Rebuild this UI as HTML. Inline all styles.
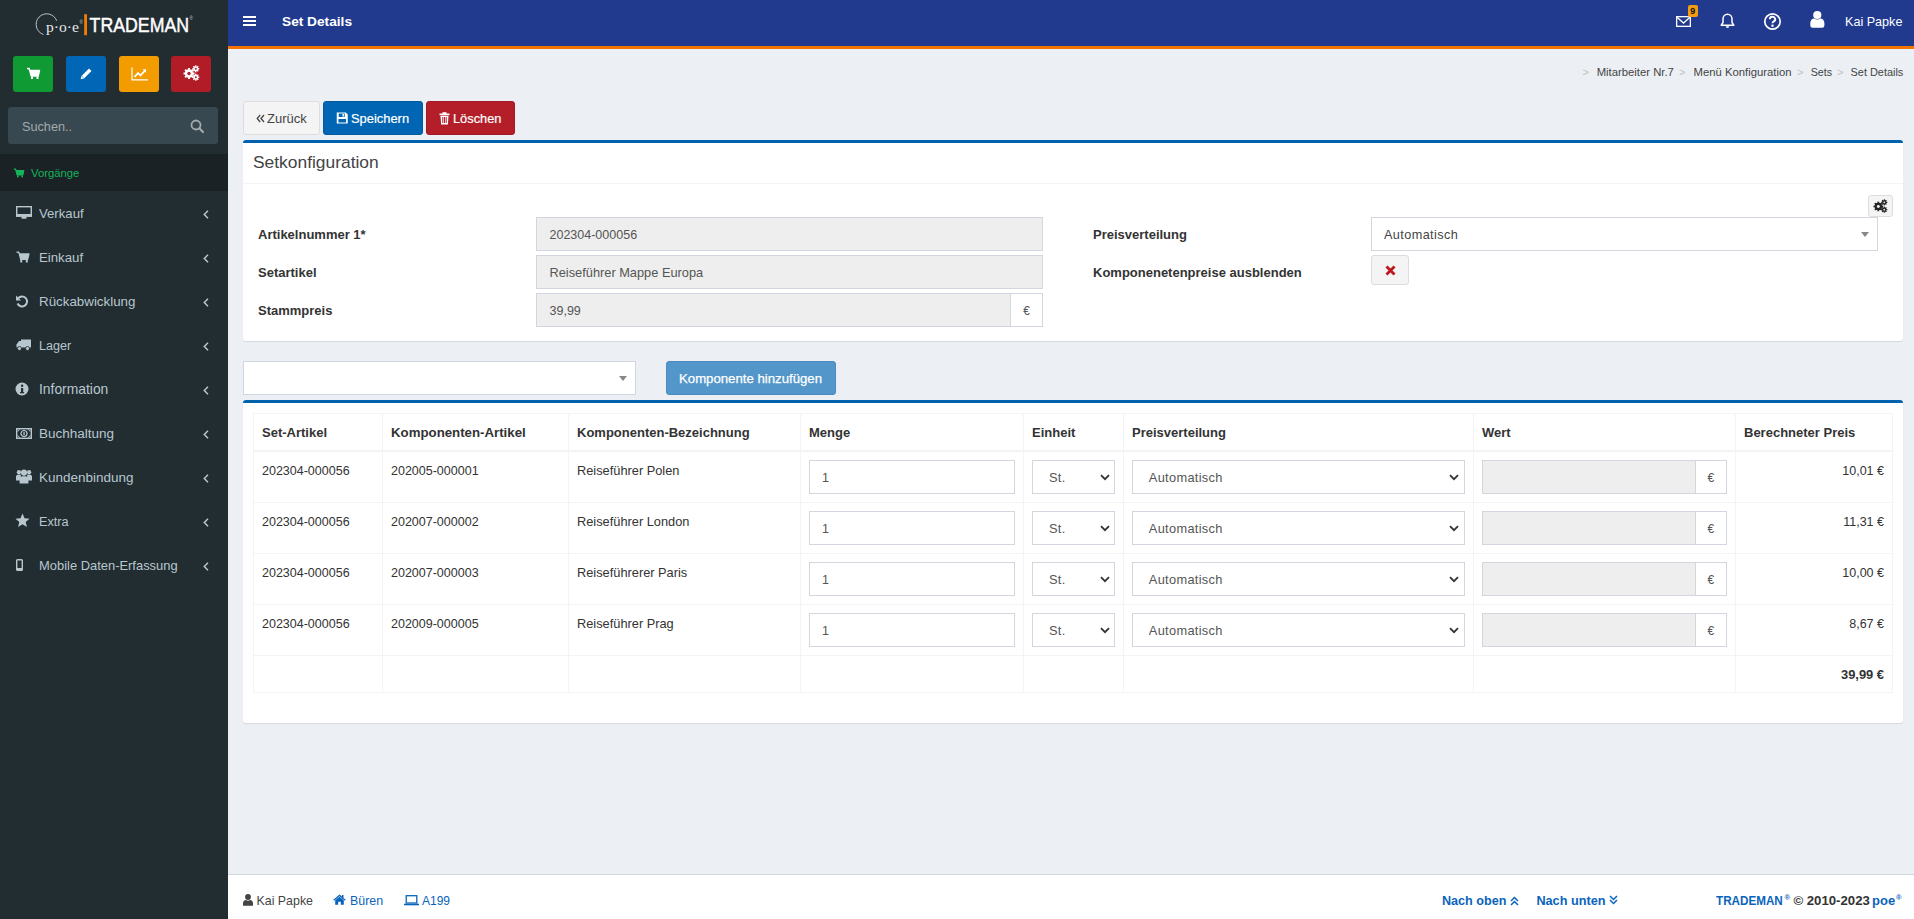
<!DOCTYPE html>
<html><head><meta charset="utf-8">
<style>
*{box-sizing:border-box;margin:0;padding:0}
html,body{width:1914px;height:919px;overflow:hidden;background:#ecf0f5;font-family:"Liberation Sans",sans-serif;color:#333}
.a{position:absolute}
.t{position:absolute;line-height:1;white-space:nowrap}
svg{position:absolute;display:block;overflow:visible}
.qb{position:absolute;top:56px;width:40px;height:36px;border-radius:3px}
.btn{position:absolute;top:101px;height:34px;border-radius:3px;border:1px solid}
.box{position:absolute;left:243px;width:1660px;background:#fff;border-top:3px solid #0062ad;border-radius:3px;box-shadow:0 1px 1px rgba(0,0,0,.1)}
.inp{position:absolute;height:34px;border:1px solid #d2d6de;background:#eee}
.fin{position:absolute;height:34px;border:1px solid #d2d6de;background:#fff}
.vl{position:absolute;top:413px;width:1px;height:280px;background:#f4f4f4}
.hl{position:absolute;left:253px;width:1640px;height:1px;background:#f4f4f4}
</style></head>
<body>
<div class="a" style="left:0;top:0;width:228px;height:919px;background:#222d32"></div>
<svg style="left:30px;top:10px" width="170" height="30" viewBox="0 0 170 30">
  <path d="M13.5 24.5 A10.6 10.6 0 1 1 26.7 10.8" fill="none" stroke="#d0d0d0" stroke-width="0.9"/>
  <text x="16" y="21.5" font-family="Liberation Serif" font-size="15" fill="#e8e8e8" textLength="33" lengthAdjust="spacingAndGlyphs">p·o·e</text>
  <text x="49.5" y="14" font-family="Liberation Sans" font-size="4.5" fill="#ccc">®</text>
  <rect x="54.2" y="4.2" width="2.8" height="21" fill="#f57c00"/>
  <text x="59.6" y="22.2" font-family="Liberation Sans" font-size="20.5" fill="#fff" stroke="#fff" stroke-width="0.45" textLength="99.5" lengthAdjust="spacingAndGlyphs">TRADEMAN</text>
  <text x="159.6" y="9.5" font-family="Liberation Sans" font-size="4.5" fill="#ccc">®</text>
</svg>
<div class="qb" style="left:13px;background:#0f9a34"></div>
<div class="qb" style="left:66px;background:#0066b5"></div>
<div class="qb" style="left:119px;background:#f39c00"></div>
<div class="qb" style="left:171px;background:#b11c27"></div>
<svg style="left:26px;top:66px" width="15" height="15" viewBox="0 0 15 15"><path d="M1 2.5h2.2l2 7.5h7l1.3-5.5H4.3" fill="#fff" stroke="#fff" stroke-width="1.4" stroke-linejoin="round"/><rect x="4.5" y="4.5" width="8.5" height="4.5" fill="#fff"/><rect x="5" y="10.5" width="2" height="2.5" fill="#fff"/><rect x="10.5" y="10.5" width="2" height="2.5" fill="#fff"/></svg>
<svg style="left:79px;top:67px" width="14" height="14" viewBox="0 0 14 14"><path d="M10 1.5l2.5 2.5-7.5 7.5-3.3 0.8 0.8-3.3z" fill="#fff"/><path d="M3.2 9.5l1.3 1.3" stroke="#0066b5" stroke-width="0.8"/></svg>
<svg style="left:131px;top:67px" width="17" height="14" viewBox="0 0 17 14"><path d="M1 0.5v12.3h16" fill="none" stroke="#fff" stroke-width="1.2"/><path d="M3.5 10l3.5-4 2.5 2.5 4.5-5" fill="none" stroke="#fff" stroke-width="1.8"/><path d="M11.5 2.2h3.5v3.5z" fill="#fff"/></svg>
<svg style="left:183px;top:65px" width="17" height="16" viewBox="0 0 17 16"><g fill="#fff"><circle cx="6" cy="8.5" r="4.2"/><rect x="5" y="3" width="2" height="11"/><rect x="0.5" y="7.5" width="11" height="2"/><rect x="5" y="3" width="2" height="11" transform="rotate(45 6 8.5)"/><rect x="5" y="3" width="2" height="11" transform="rotate(-45 6 8.5)"/>
 <circle cx="12.8" cy="3.8" r="2.4"/><rect x="12.1" y="0.3" width="1.4" height="7"/><rect x="9.3" y="3.1" width="7" height="1.4"/><rect x="12.1" y="0.3" width="1.4" height="7" transform="rotate(45 12.8 3.8)"/><rect x="12.1" y="0.3" width="1.4" height="7" transform="rotate(-45 12.8 3.8)"/>
 <circle cx="12.8" cy="12.2" r="2.4"/><rect x="12.1" y="8.7" width="1.4" height="7"/><rect x="9.3" y="11.5" width="7" height="1.4"/><rect x="12.1" y="8.7" width="1.4" height="7" transform="rotate(45 12.8 12.2)"/><rect x="12.1" y="8.7" width="1.4" height="7" transform="rotate(-45 12.8 12.2)"/></g>
 <circle cx="6" cy="8.5" r="1.7" fill="#b11c27"/><circle cx="12.8" cy="3.8" r="1" fill="#b11c27"/><circle cx="12.8" cy="12.2" r="1" fill="#b11c27"/></svg>
<div class="a" style="left:8px;top:107px;width:210px;height:37px;background:#374850;border-radius:3px"></div>
<div class="t" style="left:22px;top:121px;font-size:12.7px;color:#a3a9ab;">Suchen..</div>
<svg style="left:190px;top:119px" width="15" height="15" viewBox="0 0 15 15"><circle cx="6" cy="6" r="4.5" fill="none" stroke="#a3a9ab" stroke-width="1.8"/><path d="M9.3 9.3l3.7 3.7" stroke="#a3a9ab" stroke-width="2.2" stroke-linecap="round"/></svg>
<div class="a" style="left:0;top:154px;width:228px;height:37px;background:#1a2226"></div>
<svg style="left:13px;top:167px" width="12" height="12" viewBox="0 0 15 15"><path d="M1 2.5h2.2l2 7.5h7l1.3-5.5H4.3" fill="#16b35a" stroke="#16b35a" stroke-width="1.4" stroke-linejoin="round"/><rect x="4.5" y="4.5" width="8.5" height="4.5" fill="#16b35a"/><rect x="5" y="10.5" width="2" height="2.5" fill="#16b35a"/><rect x="10.5" y="10.5" width="2" height="2.5" fill="#16b35a"/></svg>
<div class="t" style="left:31px;top:168px;font-size:11.3px;color:#16b35a;">Vorgänge</div>
<svg style="left:16px;top:206px" width="16" height="14" viewBox="0 0 16 14"><rect x="0.7" y="0.7" width="14.6" height="9.3" fill="none" stroke="#b8c7ce" stroke-width="1.4"/><rect x="0" y="8" width="16" height="2.8" fill="#b8c7ce"/><rect x="5.5" y="10.5" width="5" height="2.2" fill="#b8c7ce"/></svg>
<div class="t" style="left:39px;top:207px;font-size:13.16px;color:#b8c7ce;">Verkauf</div>
<svg style="left:203px;top:210px" width="6" height="9" viewBox="0 0 6 9"><path d="M5 0.8L1.3 4.5 5 8.2" fill="none" stroke="#b8c7ce" stroke-width="1.5"/></svg>
<svg style="left:16px;top:251px" width="14" height="12" viewBox="0 0 15 13"><path d="M0.5 1.2h2.5l2 8h7.5l1.5-6H4" fill="#b8c7ce" stroke="#b8c7ce" stroke-width="1.3" stroke-linejoin="round"/><rect x="4.5" y="9.8" width="2.2" height="2.6" fill="#b8c7ce"/><rect x="10.5" y="9.8" width="2.2" height="2.6" fill="#b8c7ce"/></svg>
<div class="t" style="left:39px;top:251px;font-size:13.23px;color:#b8c7ce;">Einkauf</div>
<svg style="left:203px;top:254px" width="6" height="9" viewBox="0 0 6 9"><path d="M5 0.8L1.3 4.5 5 8.2" fill="none" stroke="#b8c7ce" stroke-width="1.5"/></svg>
<svg style="left:15px;top:294px" width="14" height="14" viewBox="0 0 14 14"><path d="M3.2 4.2A5 5 0 1 1 2.5 9.5" fill="none" stroke="#b8c7ce" stroke-width="2"/><path d="M1 1.5v5h5z" fill="#b8c7ce"/></svg>
<div class="t" style="left:39px;top:295px;font-size:13.35px;color:#b8c7ce;">Rückabwicklung</div>
<svg style="left:203px;top:298px" width="6" height="9" viewBox="0 0 6 9"><path d="M5 0.8L1.3 4.5 5 8.2" fill="none" stroke="#b8c7ce" stroke-width="1.5"/></svg>
<svg style="left:16px;top:339px" width="15" height="12" viewBox="0 0 15 12"><rect x="5" y="0.5" width="10" height="8" fill="#b8c7ce"/><path d="M0.5 5.5l2.5-3.5h3v6.5H0.5z" fill="#b8c7ce"/><circle cx="3.5" cy="9.5" r="2" fill="#b8c7ce" stroke="#222d32" stroke-width="0.8"/><circle cx="11.5" cy="9.5" r="2" fill="#b8c7ce" stroke="#222d32" stroke-width="0.8"/></svg>
<div class="t" style="left:39px;top:340px;font-size:12.62px;color:#b8c7ce;">Lager</div>
<svg style="left:203px;top:342px" width="6" height="9" viewBox="0 0 6 9"><path d="M5 0.8L1.3 4.5 5 8.2" fill="none" stroke="#b8c7ce" stroke-width="1.5"/></svg>
<svg style="left:15px;top:382px" width="14" height="14" viewBox="0 0 14 14"><circle cx="7" cy="7" r="6.5" fill="#b8c7ce"/><rect x="6" y="6" width="2.2" height="5" fill="#222d32"/><rect x="5" y="10" width="4.2" height="1.3" fill="#222d32"/><circle cx="7.1" cy="3.8" r="1.2" fill="#222d32"/></svg>
<div class="t" style="left:39px;top:383px;font-size:13.86px;color:#b8c7ce;">Information</div>
<svg style="left:203px;top:386px" width="6" height="9" viewBox="0 0 6 9"><path d="M5 0.8L1.3 4.5 5 8.2" fill="none" stroke="#b8c7ce" stroke-width="1.5"/></svg>
<svg style="left:16px;top:428px" width="16" height="11" viewBox="0 0 16 11"><rect x="0.7" y="0.7" width="14.6" height="9.6" fill="none" stroke="#b8c7ce" stroke-width="1.4"/><path d="M1.4 3.2a2.2 2.2 0 0 0 2-2M14.6 3.2a2.2 2.2 0 0 1-2-2M1.4 7.8a2.2 2.2 0 0 1 2 2M14.6 7.8a2.2 2.2 0 0 0-2 2" fill="none" stroke="#b8c7ce" stroke-width="1"/><circle cx="8" cy="5.5" r="3" fill="none" stroke="#b8c7ce" stroke-width="1.2"/><rect x="7.4" y="3.8" width="1.3" height="3.4" fill="#b8c7ce"/></svg>
<div class="t" style="left:39px;top:427px;font-size:13.49px;color:#b8c7ce;">Buchhaltung</div>
<svg style="left:203px;top:430px" width="6" height="9" viewBox="0 0 6 9"><path d="M5 0.8L1.3 4.5 5 8.2" fill="none" stroke="#b8c7ce" stroke-width="1.5"/></svg>
<svg style="left:16px;top:469px" width="16" height="15" viewBox="0 0 16 15"><circle cx="2.9" cy="3.2" r="2.1" fill="#b8c7ce"/><circle cx="13.1" cy="3.2" r="2.1" fill="#b8c7ce"/><circle cx="8" cy="3.6" r="3.1" fill="#b8c7ce"/><path d="M0 11.5V8q0-2.6 2.6-2.6h2.2v6.1z" fill="#b8c7ce"/><path d="M16 11.5V8q0-2.6-2.6-2.6h-2.2v6.1z" fill="#b8c7ce"/><path d="M3.6 14.6v-4.3q0-3.1 3-3.1h2.8q3 0 3 3.1v4.3z" fill="#b8c7ce"/></svg>
<div class="t" style="left:39px;top:471px;font-size:13.47px;color:#b8c7ce;">Kundenbindung</div>
<svg style="left:203px;top:474px" width="6" height="9" viewBox="0 0 6 9"><path d="M5 0.8L1.3 4.5 5 8.2" fill="none" stroke="#b8c7ce" stroke-width="1.5"/></svg>
<svg style="left:15px;top:513px" width="15" height="15" viewBox="0 0 15 15"><path d="M7.5 0.5l2 4.8 5 .4-3.8 3.3 1.2 5-4.4-2.7-4.4 2.7 1.2-5L0.5 5.7l5-.4z" fill="#b8c7ce"/></svg>
<div class="t" style="left:39px;top:516px;font-size:12.65px;color:#b8c7ce;">Extra</div>
<svg style="left:203px;top:518px" width="6" height="9" viewBox="0 0 6 9"><path d="M5 0.8L1.3 4.5 5 8.2" fill="none" stroke="#b8c7ce" stroke-width="1.5"/></svg>
<svg style="left:16px;top:559px" width="7" height="12" viewBox="0 0 7 12"><rect x="0.7" y="0.7" width="5.6" height="10.6" rx="0.8" fill="none" stroke="#b8c7ce" stroke-width="1.4"/><rect x="1" y="9" width="5" height="2" fill="#b8c7ce"/></svg>
<div class="t" style="left:39px;top:560px;font-size:12.93px;color:#b8c7ce;">Mobile Daten-Erfassung</div>
<svg style="left:203px;top:562px" width="6" height="9" viewBox="0 0 6 9"><path d="M5 0.8L1.3 4.5 5 8.2" fill="none" stroke="#b8c7ce" stroke-width="1.5"/></svg>
<div class="a" style="left:228px;top:0;width:1686px;height:46px;background:#213a8e"></div>
<div class="a" style="left:228px;top:46px;width:1686px;height:3px;background:#f27300"></div>
<div class="a" style="left:243px;top:16px;width:13px;height:2px;background:#fff"></div>
<div class="a" style="left:243px;top:20px;width:13px;height:2px;background:#fff"></div>
<div class="a" style="left:243px;top:24px;width:13px;height:2px;background:#fff"></div>
<div class="t" style="left:282px;top:15px;font-size:13.7px;color:#fff;font-weight:bold;">Set Details</div>
<svg style="left:1676px;top:16px" width="15" height="11" viewBox="0 0 15 11"><rect x="0.65" y="0.65" width="13.7" height="9.7" fill="none" stroke="#fff" stroke-width="1.3"/><path d="M1 1.3l6.5 5.8 6.5-5.8" fill="none" stroke="#fff" stroke-width="1.3"/></svg>
<div class="a" style="left:1688px;top:5px;width:10px;height:12px;background:#f39c12;border-radius:2px"></div>
<div class="t" style="left:1690.2px;top:7px;font-size:9px;color:#111;font-weight:bold;">9</div>
<svg style="left:1720px;top:13px" width="15" height="16" viewBox="0 0 15 16"><path d="M7.5 1.2c-2.8 0-4.5 2.2-4.5 4.8v3.5L1.2 12.2h12.6L12 9.5V6c0-2.6-1.7-4.8-4.5-4.8z" fill="none" stroke="#fff" stroke-width="1.5" stroke-linejoin="round"/><path d="M5.8 13.3a1.7 1.7 0 0 0 3.4 0z" fill="#fff"/></svg>
<svg style="left:1763px;top:12px" width="19" height="19" viewBox="0 0 19 19"><circle cx="9.5" cy="9.5" r="7.7" fill="none" stroke="#fff" stroke-width="1.7"/><path d="M6.8 7.2a2.7 2.5 0 1 1 3.8 2.3c-.8.4-1.1.9-1.1 1.7" fill="none" stroke="#fff" stroke-width="1.9"/><rect x="8.4" y="12.6" width="2.2" height="2.2" fill="#fff"/></svg>
<svg style="left:1810px;top:10px" width="15" height="18" viewBox="0 0 15 18"><circle cx="7.3" cy="5" r="4.1" fill="#fff"/><path d="M0.3 15.5v-2.2c0-2.8 1.9-4.7 3.8-4.7q3.2 1.7 6.4 0c1.9 0 3.9 1.9 3.9 4.7v2.2q0 2.3-2.3 2.3H2.6q-2.3 0-2.3-2.3z" fill="#fff"/></svg>
<div class="t" style="left:1845px;top:16px;font-size:12.6px;color:#fff;">Kai Papke</div>
<div class="t" style="left:1596.7px;top:67px;font-size:11.3px;color:#444;">Mitarbeiter Nr.7</div>
<div class="t" style="left:1693.5px;top:67px;font-size:11.3px;color:#444;">Menü Konfiguration</div>
<div class="t" style="left:1810.7px;top:67px;font-size:10.7px;color:#444;">Sets</div>
<div class="t" style="left:1850.6px;top:67px;font-size:10.9px;color:#444;">Set Details</div>
<div class="t" style="left:1582.5px;top:67px;font-size:11px;color:#c0c0c0;">&gt;</div>
<div class="t" style="left:1679px;top:67px;font-size:11px;color:#c0c0c0;">&gt;</div>
<div class="t" style="left:1797px;top:67px;font-size:11px;color:#c0c0c0;">&gt;</div>
<div class="t" style="left:1837px;top:67px;font-size:11px;color:#c0c0c0;">&gt;</div>
<div class="btn" style="left:243px;width:77px;background:#f4f4f4;border-color:#ddd"></div>
<svg style="left:256px;top:114px" width="9" height="9" viewBox="0 0 9 9"><path d="M4.2 1L1.2 4.5l3 3.5M8 1L5 4.5 8 8" fill="none" stroke="#444" stroke-width="1.3"/></svg>
<div class="t" style="left:267px;top:112px;font-size:13px;color:#444;">Zurück</div>
<div class="btn" style="left:323px;width:100px;background:#0066b3;border-color:#005a9e"></div>
<svg style="left:336px;top:112px" width="12.5" height="12" viewBox="0 0 12 12"><path d="M0.5 0.5h9l2 2v9h-11z" fill="#fff"/><rect x="2.5" y="1.5" width="6" height="3.5" fill="#0066b3"/><rect x="6.2" y="2" width="1.5" height="2.5" fill="#fff"/><rect x="2.2" y="7" width="7.6" height="3.5" fill="#0066b3"/></svg>
<div class="t" style="left:351px;top:113px;font-size:12.9px;color:#fff;-webkit-text-stroke:0.2px #fff">Speichern</div>
<div class="btn" style="left:426px;width:89px;background:#b31e29;border-color:#a01a24"></div>
<svg style="left:439px;top:112px" width="11" height="13" viewBox="0 0 11 13"><rect x="0.5" y="1.5" width="10" height="1.7" fill="#fff"/><rect x="3.5" y="0.2" width="4" height="1.8" fill="#fff"/><path d="M1.5 3.8h8l-.6 8.7h-6.8z" fill="#fff"/><rect x="3.3" y="5" width="1" height="6" fill="#b31e29"/><rect x="5" y="5" width="1" height="6" fill="#b31e29"/><rect x="6.7" y="5" width="1" height="6" fill="#b31e29"/></svg>
<div class="t" style="left:453px;top:113px;font-size:12.8px;color:#fff;-webkit-text-stroke:0.2px #fff">Löschen</div>
<div class="box" style="top:140px;height:201px"></div>
<div class="a" style="left:243px;top:183px;width:1660px;height:1px;background:#f4f4f4"></div>
<div class="t" style="left:253px;top:154px;font-size:17.4px;color:#444;">Setkonfiguration</div>
<div class="t" style="left:258px;top:228px;font-size:13px;color:#333;font-weight:bold;">Artikelnummer 1*</div>
<div class="t" style="left:258px;top:266px;font-size:13px;color:#333;font-weight:bold;">Setartikel</div>
<div class="t" style="left:258px;top:304px;font-size:13px;color:#333;font-weight:bold;">Stammpreis</div>
<div class="inp" style="left:536px;top:217px;width:507px"></div>
<div class="t" style="left:549.5px;top:229px;font-size:12.5px;color:#555;">202304-000056</div>
<div class="inp" style="left:536px;top:255px;width:507px"></div>
<div class="t" style="left:549.5px;top:267px;font-size:12.8px;color:#555;">Reiseführer Mappe Europa</div>
<div class="inp" style="left:536px;top:293px;width:475px"></div>
<div class="t" style="left:549.5px;top:305px;font-size:12.5px;color:#555;">39,99</div>
<div class="fin" style="left:1010px;top:293px;width:33px"></div>
<div class="t" style="left:1023.2px;top:305px;font-size:12px;color:#555;">€</div>
<div class="t" style="left:1093px;top:228px;font-size:13px;color:#333;font-weight:bold;">Preisverteilung</div>
<div class="t" style="left:1093px;top:266px;font-size:13px;color:#333;font-weight:bold;">Komponenetenpreise ausblenden</div>
<div class="fin" style="left:1371px;top:217px;width:507px"></div>
<div class="t" style="left:1384px;top:229px;font-size:12.7px;color:#444;letter-spacing:0.4px">Automatisch</div>
<svg style="left:1861px;top:232px" width="8" height="5" viewBox="0 0 8 5"><path d="M0 0h8L4 5z" fill="#888"/></svg>
<div class="a" style="left:1371px;top:255px;width:38px;height:30px;background:#f4f4f4;border:1px solid #ddd;border-radius:3px"></div>
<svg style="left:1385px;top:265px" width="11" height="11" viewBox="0 0 11 11"><path d="M1.5 1.5l8 8M9.5 1.5l-8 8" stroke="#c0151f" stroke-width="2.8"/></svg>
<div class="a" style="left:1868px;top:195px;width:25px;height:22px;background:#f4f4f4;border:1px solid #ddd;border-radius:3px"></div>
<svg style="left:1873px;top:199px" width="15" height="14" viewBox="0 0 17 16"><g fill="#222"><circle cx="6" cy="8.5" r="4.2"/><rect x="5" y="3" width="2" height="11"/><rect x="0.5" y="7.5" width="11" height="2"/><rect x="5" y="3" width="2" height="11" transform="rotate(45 6 8.5)"/><rect x="5" y="3" width="2" height="11" transform="rotate(-45 6 8.5)"/>
 <circle cx="12.8" cy="3.8" r="2.4"/><rect x="12.1" y="0.3" width="1.4" height="7"/><rect x="9.3" y="3.1" width="7" height="1.4"/><rect x="12.1" y="0.3" width="1.4" height="7" transform="rotate(45 12.8 3.8)"/><rect x="12.1" y="0.3" width="1.4" height="7" transform="rotate(-45 12.8 3.8)"/>
 <circle cx="12.8" cy="12.2" r="2.4"/><rect x="12.1" y="8.7" width="1.4" height="7"/><rect x="9.3" y="11.5" width="7" height="1.4"/><rect x="12.1" y="8.7" width="1.4" height="7" transform="rotate(45 12.8 12.2)"/><rect x="12.1" y="8.7" width="1.4" height="7" transform="rotate(-45 12.8 12.2)"/></g>
 <circle cx="6" cy="8.5" r="1.7" fill="#f4f4f4"/><circle cx="12.8" cy="3.8" r="1" fill="#f4f4f4"/><circle cx="12.8" cy="12.2" r="1" fill="#f4f4f4"/></svg>
<div class="fin" style="left:243px;top:361px;width:393px"></div>
<svg style="left:619px;top:376px" width="8" height="5" viewBox="0 0 8 5"><path d="M0 0h8L4 5z" fill="#888"/></svg>
<div class="a" style="left:666px;top:361px;width:170px;height:34px;background:#5396ca;border:1px solid #4a8cc2;border-radius:3px"></div>
<div class="t" style="left:679px;top:372px;font-size:13.2px;color:#fff;-webkit-text-stroke:0.25px #fff">Komponente hinzufügen</div>
<div class="box" style="top:400px;height:323px"></div>
<div class="vl" style="left:253px"></div>
<div class="vl" style="left:382px"></div>
<div class="vl" style="left:568px"></div>
<div class="vl" style="left:800px"></div>
<div class="vl" style="left:1023px"></div>
<div class="vl" style="left:1123px"></div>
<div class="vl" style="left:1473px"></div>
<div class="vl" style="left:1735px"></div>
<div class="vl" style="left:1892px"></div>
<div class="hl" style="top:413px"></div>
<div class="hl" style="top:502px"></div>
<div class="hl" style="top:553px"></div>
<div class="hl" style="top:604px"></div>
<div class="hl" style="top:655px"></div>
<div class="hl" style="top:692px"></div>
<div class="hl" style="top:450px;height:2px"></div>
<div class="t" style="left:262px;top:426px;font-size:13px;color:#333;font-weight:bold;">Set-Artikel</div>
<div class="t" style="left:391px;top:426px;font-size:13.25px;color:#333;font-weight:bold;">Komponenten-Artikel</div>
<div class="t" style="left:577px;top:426px;font-size:13px;color:#333;font-weight:bold;">Komponenten-Bezeichnung</div>
<div class="t" style="left:809px;top:426px;font-size:13px;color:#333;font-weight:bold;">Menge</div>
<div class="t" style="left:1032px;top:426px;font-size:13px;color:#333;font-weight:bold;">Einheit</div>
<div class="t" style="left:1132px;top:426px;font-size:13px;color:#333;font-weight:bold;">Preisverteilung</div>
<div class="t" style="left:1482px;top:426px;font-size:13px;color:#333;font-weight:bold;">Wert</div>
<div class="t" style="left:1744px;top:426px;font-size:13px;color:#333;font-weight:bold;">Berechneter Preis</div>
<div class="t" style="left:262px;top:465px;font-size:12.5px;color:#333;">202304-000056</div>
<div class="t" style="left:391px;top:465px;font-size:12.5px;color:#333;">202005-000001</div>
<div class="t" style="left:577px;top:465px;font-size:12.8px;color:#333;">Reiseführer Polen</div>
<div class="fin" style="left:809px;top:460px;width:206px"></div>
<div class="t" style="left:822px;top:472px;font-size:12.5px;color:#555;">1</div>
<div class="fin" style="left:1032px;top:460px;width:83px"></div>
<div class="t" style="left:1049px;top:472px;font-size:12.8px;color:#555;letter-spacing:0.3px">St.</div>
<svg style="left:1100px;top:474px" width="10" height="7" viewBox="0 0 10 7"><path d="M1 1.2l4 4 4-4" fill="none" stroke="#333" stroke-width="1.8"/></svg>
<div class="fin" style="left:1132px;top:460px;width:333px"></div>
<div class="t" style="left:1148.8px;top:472px;font-size:12.8px;color:#555;letter-spacing:0.32px">Automatisch</div>
<svg style="left:1449px;top:474px" width="10" height="7" viewBox="0 0 10 7"><path d="M1 1.2l4 4 4-4" fill="none" stroke="#333" stroke-width="1.8"/></svg>
<div class="inp" style="left:1482px;top:460px;width:214px"></div>
<div class="fin" style="left:1695px;top:460px;width:32px"></div>
<div class="t" style="left:1707.5px;top:472px;font-size:12px;color:#555;">€</div>
<div class="t" style="right:30px;top:465px;font-size:12.5px;color:#333;">10,01 €</div>
<div class="t" style="left:262px;top:516px;font-size:12.5px;color:#333;">202304-000056</div>
<div class="t" style="left:391px;top:516px;font-size:12.5px;color:#333;">202007-000002</div>
<div class="t" style="left:577px;top:516px;font-size:12.8px;color:#333;">Reiseführer London</div>
<div class="fin" style="left:809px;top:511px;width:206px"></div>
<div class="t" style="left:822px;top:523px;font-size:12.5px;color:#555;">1</div>
<div class="fin" style="left:1032px;top:511px;width:83px"></div>
<div class="t" style="left:1049px;top:523px;font-size:12.8px;color:#555;letter-spacing:0.3px">St.</div>
<svg style="left:1100px;top:525px" width="10" height="7" viewBox="0 0 10 7"><path d="M1 1.2l4 4 4-4" fill="none" stroke="#333" stroke-width="1.8"/></svg>
<div class="fin" style="left:1132px;top:511px;width:333px"></div>
<div class="t" style="left:1148.8px;top:523px;font-size:12.8px;color:#555;letter-spacing:0.32px">Automatisch</div>
<svg style="left:1449px;top:525px" width="10" height="7" viewBox="0 0 10 7"><path d="M1 1.2l4 4 4-4" fill="none" stroke="#333" stroke-width="1.8"/></svg>
<div class="inp" style="left:1482px;top:511px;width:214px"></div>
<div class="fin" style="left:1695px;top:511px;width:32px"></div>
<div class="t" style="left:1707.5px;top:523px;font-size:12px;color:#555;">€</div>
<div class="t" style="right:30px;top:516px;font-size:12.5px;color:#333;">11,31 €</div>
<div class="t" style="left:262px;top:567px;font-size:12.5px;color:#333;">202304-000056</div>
<div class="t" style="left:391px;top:567px;font-size:12.5px;color:#333;">202007-000003</div>
<div class="t" style="left:577px;top:567px;font-size:12.8px;color:#333;">Reiseführerer Paris</div>
<div class="fin" style="left:809px;top:562px;width:206px"></div>
<div class="t" style="left:822px;top:574px;font-size:12.5px;color:#555;">1</div>
<div class="fin" style="left:1032px;top:562px;width:83px"></div>
<div class="t" style="left:1049px;top:574px;font-size:12.8px;color:#555;letter-spacing:0.3px">St.</div>
<svg style="left:1100px;top:576px" width="10" height="7" viewBox="0 0 10 7"><path d="M1 1.2l4 4 4-4" fill="none" stroke="#333" stroke-width="1.8"/></svg>
<div class="fin" style="left:1132px;top:562px;width:333px"></div>
<div class="t" style="left:1148.8px;top:574px;font-size:12.8px;color:#555;letter-spacing:0.32px">Automatisch</div>
<svg style="left:1449px;top:576px" width="10" height="7" viewBox="0 0 10 7"><path d="M1 1.2l4 4 4-4" fill="none" stroke="#333" stroke-width="1.8"/></svg>
<div class="inp" style="left:1482px;top:562px;width:214px"></div>
<div class="fin" style="left:1695px;top:562px;width:32px"></div>
<div class="t" style="left:1707.5px;top:574px;font-size:12px;color:#555;">€</div>
<div class="t" style="right:30px;top:567px;font-size:12.5px;color:#333;">10,00 €</div>
<div class="t" style="left:262px;top:618px;font-size:12.5px;color:#333;">202304-000056</div>
<div class="t" style="left:391px;top:618px;font-size:12.5px;color:#333;">202009-000005</div>
<div class="t" style="left:577px;top:618px;font-size:12.8px;color:#333;">Reiseführer Prag</div>
<div class="fin" style="left:809px;top:613px;width:206px"></div>
<div class="t" style="left:822px;top:625px;font-size:12.5px;color:#555;">1</div>
<div class="fin" style="left:1032px;top:613px;width:83px"></div>
<div class="t" style="left:1049px;top:625px;font-size:12.8px;color:#555;letter-spacing:0.3px">St.</div>
<svg style="left:1100px;top:627px" width="10" height="7" viewBox="0 0 10 7"><path d="M1 1.2l4 4 4-4" fill="none" stroke="#333" stroke-width="1.8"/></svg>
<div class="fin" style="left:1132px;top:613px;width:333px"></div>
<div class="t" style="left:1148.8px;top:625px;font-size:12.8px;color:#555;letter-spacing:0.32px">Automatisch</div>
<svg style="left:1449px;top:627px" width="10" height="7" viewBox="0 0 10 7"><path d="M1 1.2l4 4 4-4" fill="none" stroke="#333" stroke-width="1.8"/></svg>
<div class="inp" style="left:1482px;top:613px;width:214px"></div>
<div class="fin" style="left:1695px;top:613px;width:32px"></div>
<div class="t" style="left:1707.5px;top:625px;font-size:12px;color:#555;">€</div>
<div class="t" style="right:30px;top:618px;font-size:12.5px;color:#333;">8,67 €</div>
<div class="t" style="right:30px;top:669px;font-size:12.9px;color:#333;font-weight:bold;">39,99 €</div>
<div class="a" style="left:228px;top:874px;width:1686px;height:45px;background:#fff;border-top:1px solid #d2d6de"></div>
<svg style="left:243px;top:894px" width="10" height="12" viewBox="0 0 10 12"><circle cx="5" cy="3" r="2.9" fill="#444"/><path d="M0 11.8v-2.5C0 7.5 1.3 6 2.8 6q2.2 1.5 4.4 0C8.7 6 10 7.5 10 9.3v2.5z" fill="#444"/></svg>
<div class="t" style="left:256.5px;top:895px;font-size:12.4px;color:#444;">Kai Papke</div>
<svg style="left:333px;top:894px" width="13" height="11" viewBox="0 0 13 11"><path d="M6.5 0.5L0.3 5.8l0.8 0.9 5.4-4.5 5.4 4.5.8-.9-2.2-1.9V1h-1.6v1.5z" fill="#0b64bc"/><path d="M2.2 6.2L6.5 2.7l4.3 3.5v4.6H7.8V7.8H5.2v3H2.2z" fill="#0b64bc"/></svg>
<div class="t" style="left:350px;top:895px;font-size:12.4px;color:#0b64bc;">Büren</div>
<svg style="left:404px;top:895px" width="15" height="11" viewBox="0 0 15 11"><rect x="2.2" y="0.7" width="10.6" height="7.3" fill="none" stroke="#0b64bc" stroke-width="1.3"/><rect x="0" y="8.7" width="15" height="1.6" fill="#0b64bc"/></svg>
<div class="t" style="left:422px;top:895px;font-size:12px;color:#0b64bc;">A199</div>
<div class="t" style="left:1442px;top:895px;font-size:12.6px;color:#0b64bc;font-weight:bold;">Nach oben</div>
<svg style="left:1510px;top:896px" width="9" height="10" viewBox="0 0 9 10"><path d="M1 5L4.5 1.5 8 5M1 9l3.5-3.5L8 9" fill="none" stroke="#0b64bc" stroke-width="1.5"/></svg>
<div class="t" style="left:1536.4px;top:895px;font-size:12.7px;color:#0b64bc;font-weight:bold;">Nach unten</div>
<svg style="left:1609px;top:895px" width="9" height="10" viewBox="0 0 9 10"><path d="M1 1l3.5 3.5L8 1M1 5l3.5 3.5L8 5" fill="none" stroke="#0b64bc" stroke-width="1.5"/></svg>
<div class="t" style="left:1716px;top:895px;font-size:12.7px;color:#0b64bc;font-weight:bold;transform:scaleX(0.92);transform-origin:0 0">TRADEMAN</div>
<div class="t" style="left:1784.5px;top:894px;font-size:7.5px;color:#0b64bc;font-weight:bold;">®</div>
<div class="t" style="left:1793.4px;top:894px;font-size:13.2px;color:#333;font-weight:bold;">© 2010-2023</div>
<div class="t" style="left:1872px;top:894px;font-size:13px;color:#0b64bc;font-weight:bold;">poe</div>
<div class="t" style="left:1896px;top:894px;font-size:7.5px;color:#0b64bc;font-weight:bold;">®</div>
</body></html>
